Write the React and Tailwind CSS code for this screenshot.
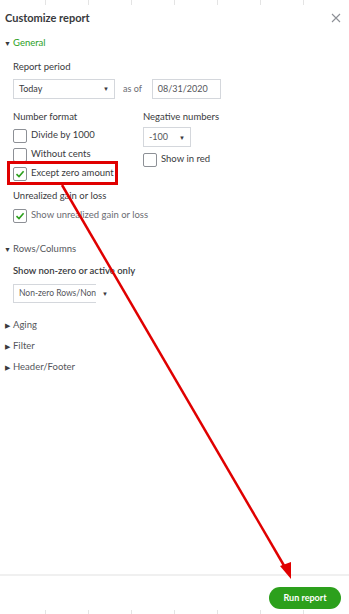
import React from 'react';

const Box = ({ checked }) => (
  <span className="w-[14px] h-[14px] border border-[#8d9096] rounded-[2px] bg-white flex items-center justify-center shrink-0">
    {checked && (
      <svg width="10" height="10" viewBox="0 0 10 10">
        <path d="M1.5 5.2 L4 7.6 L8.6 2.3" fill="none" stroke="#2ca01c" strokeWidth="1.6" />
      </svg>
    )}
  </span>
);

const Check = ({ label, checked, muted }) => (
  <div className="flex items-center gap-[4px] h-[19px]">
    <Box checked={checked} />
    <span className={muted ? 'text-[#6b6c72]' : ''}>{label}</span>
  </div>
);

const Section = ({ title }) => (
  <div className="flex items-center h-[21px] pl-[5px]">
    <span className="text-[7px] w-[8px]">▶</span>
    <span className="text-[#55565b]">{title}</span>
  </div>
);

export default function App() {
  return (
    <div className="relative w-[349px] h-[614px] bg-white overflow-hidden flex flex-col text-[9.5px] text-[#393a3d]" style={{ fontFamily: 'Lato, "Open Sans", sans-serif' }}>
      <div className="flex justify-between h-[6px] px-[45px]">
        {[0, 1, 2, 3, 4, 5, 6].map(i => <span key={i} className="w-px h-[5px] bg-[#e4e4e4]" />)}
      </div>

      <div className="flex items-center justify-between pl-[5px] pr-[7px] h-[24px]">
        <span className="text-[11px] font-bold text-[#393a3d]">Customize report</span>
        <svg width="10" height="10" viewBox="0 0 10 10" className="mr-[1px]">
          <path d="M1 1 L9 9 M9 1 L1 9" stroke="#8d9096" strokeWidth="1.1" />
        </svg>
      </div>

      <div className="flex items-center h-[24px] pl-[4px] mt-[1px]">
        <span className="text-[7px] w-[9px]">▼</span>
        <span className="text-[#2ca01c]">General</span>
      </div>

      <div className="pl-[13px] flex flex-col">
        <div className="h-[22px] flex items-end pb-[3px]">Report period</div>
        <div className="flex items-center h-[21px] mt-[1px]">
          <div className="w-[102px] h-[20px] border border-[#d4d7dc] flex items-center justify-between px-[5px] text-[9px]">
            <span>Today</span>
            <span className="text-[6px]">▼</span>
          </div>
          <span className="ml-[8px] text-[#6b6c72] text-[9px]">as of</span>
          <div className="ml-[10px] w-[69px] h-[20px] border border-[#d4d7dc] flex items-center px-[5px] text-[9px] text-[#55565b]">08/31/2020</div>
        </div>

        <div className="flex mt-[10px]">
          <div className="w-[130px] flex flex-col">
            <div className="h-[17px] flex items-center">Number format</div>
            <Check label="Divide by 1000" />
            <Check label="Without cents" />
            <Check label="Except zero amount" checked />
          </div>
          <div className="flex flex-col">
            <div className="h-[17px] flex items-center">Negative numbers</div>
            <div className="w-[48px] h-[20px] border border-[#d4d7dc] flex items-center justify-between px-[5px] mt-[1px] text-[9px] text-[#55565b]">
              <span>-100</span>
              <span className="text-[6px] text-[#393a3d]">▼</span>
            </div>
            <div className="mt-[3px]"><Check label="Show in red" /></div>
          </div>
        </div>

        <div className="h-[22px] flex items-end pb-[2px]">Unrealized gain or loss</div>
        <div className="mt-[1px]"><Check label="Show unrealized gain or loss" checked muted /></div>
      </div>

      <div className="flex items-center h-[21px] pl-[4px] mt-[14px]">
        <span className="text-[7px] w-[9px]">▼</span>
        <span className="text-[#55565b]">Rows/Columns</span>
      </div>

      <div className="pl-[13px] flex flex-col">
        <div className="h-[22px] flex items-center font-semibold">Show non-zero or active only</div>
        <div className="flex items-center h-[20px] mt-[1px]">
          <div className="w-[83px] h-[19px] border border-r-0 border-[#d4d7dc] flex items-center pl-[5px] overflow-hidden whitespace-nowrap text-[8.5px] text-[#55565b]">
            Non-zero Rows/Non
          </div>
          <span className="ml-[6px] text-[6px]">▼</span>
        </div>
      </div>

      <div className="mt-[12px] flex flex-col">
        <Section title="Aging" />
        <Section title="Filter" />
        <Section title="Header/Footer" />
      </div>

      <div className="flex-1" />

      <div className="border-t-2 border-[#f0f0f0] h-[34px] flex items-start justify-end pr-[8px] pt-[11px]">
        <button className="bg-[#2ca01c] text-white font-bold text-[9px] rounded-full w-[72px] h-[22px]">Run report</button>
      </div>
      <div className="flex justify-between h-[6px] px-[45px] items-end">
        {[0, 1, 2, 3, 4, 5, 6].map(i => <span key={i} className="w-px h-[4px] bg-[#e4e4e4]" />)}
      </div>

      <div className="absolute left-[7px] top-[161px] w-[111px] h-[24px] border-[3px] border-[#e00000]" />
      <svg className="absolute left-0 top-0" width="349" height="614" viewBox="0 0 349 614">
        <line x1="62" y1="185" x2="286" y2="569" stroke="#e00000" strokeWidth="2.5" />
        <polygon points="291,579 280,566 291,562" fill="#e00000" />
      </svg>
    </div>
  );
}
